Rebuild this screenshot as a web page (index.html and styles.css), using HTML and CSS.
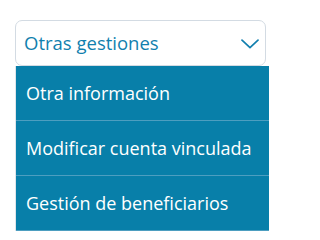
FILE: index.html
```html
<!DOCTYPE html>
<html lang="es">
<head>
<meta charset="utf-8">
<link rel="stylesheet" href="styles.css">
</head>
<body>
<div class="dropdown">
  <div class="select">
    <span class="select-label">Otras gestiones</span>
    <svg class="chevron" width="18" height="10" viewBox="0 0 18 10"><path d="M1 1.2 L9 8.6 L17 1.2" fill="none" stroke="#117fae" stroke-width="1.7" stroke-linecap="round" stroke-linejoin="round"/></svg>
  </div>
  <ul class="menu">
    <li class="menu-item">Otra información</li>
    <li class="menu-item">Modificar cuenta vinculada</li>
    <li class="menu-item">Gestión de beneficiarios</li>
  </ul>
</div>
</body>
</html>
```
FILE: styles.css
```css
html, body {
  margin: 0;
  padding: 0;
  overflow: hidden;
  background: #ffffff;
  font-family: "Open Sans", "Noto Sans", sans-serif;
}
.dropdown {
  padding-top: 20px;
  padding-left: 15px;
}
.select {
  box-sizing: border-box;
  width: 251px;
  height: 46px;
  border: 1px solid #d3dbe3;
  border-radius: 7px;
  display: flex;
  align-items: center;
  justify-content: space-between;
  padding: 0 6px 0 8px;
}
.select-label {
  color: #117fae;
  font-size: 18.5px;
  line-height: 1;
}
.chevron {
  display: block;
  margin-top: 1px;
}
.menu {
  list-style: none;
  margin: 0;
  padding: 0;
  width: 253px;
  border-left: 1px solid #dfe5eb;
}
.menu-item {
  box-sizing: border-box;
  height: 55px;
  background: #087fa9;
  color: #ffffff;
  font-size: 18px;
  display: flex;
  align-items: center;
  padding-left: 10px;
  border-bottom: 1px solid #4d9ec0;
  white-space: nowrap;
}
```
